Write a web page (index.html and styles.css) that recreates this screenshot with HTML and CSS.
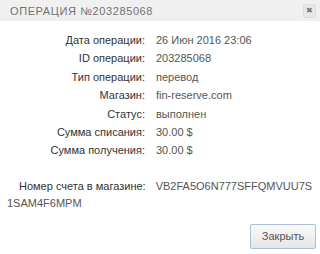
FILE: index.html
```html
<!DOCTYPE html>
<html lang="ru">
<head>
  <meta charset="UTF-8">
  <title>Операция №203285068</title>
  <link rel="stylesheet" href="styles.css">
</head>
<body>

<div class="dialog">
  <div class="dialog-head">
    <span class="dialog-title">Операция №203285068</span>
    <span class="dialog-close">&#x2716;</span>
  </div>

  <div class="dialog-body">
    <div class="row"><span class="label">Дата операции:</span><span class="value">26 Июн 2016 23:06</span></div>
    <div class="row"><span class="label">ID операции:</span><span class="value">203285068</span></div>
    <div class="row"><span class="label">Тип операции:</span><span class="value">перевод</span></div>
    <div class="row"><span class="label">Магазин:</span><span class="value">fin-reserve.com</span></div>
    <div class="row"><span class="label">Статус:</span><span class="value">выполнен</span></div>
    <div class="row"><span class="label">Сумма списания:</span><span class="value">30.00 $</span></div>
    <div class="row"><span class="label">Сумма получения:</span><span class="value">30.00 $</span></div>

    <p class="long"><span class="long-label">Номер счета в магазине:</span><span class="value">VB2FA5O6N777SFFQMVUU7S1SAM4F6MPM</span></p>
  </div>

  <div class="dialog-foot">
    <button class="btn">Закрыть</button>
  </div>
</div>

</body>
</html>
```

FILE: styles.css
```css
body {
  margin: 0;
  font-family: "Liberation Sans", Arial, sans-serif;
  font-size: 11px;
  color: #333;
  background: #fff;
}

.dialog-head {
  display: flex;
  align-items: center;
  justify-content: space-between;
  height: 21px;
  padding: 0 4px 0 10px;
  background: #f0f0f0;
}

.dialog-title {
  text-transform: uppercase;
  letter-spacing: 0.6px;
  color: #707070;
  font-size: 11px;
}

.dialog-close {
  width: 11px;
  height: 12px;
  border: 1px solid #ddd;
  border-radius: 2px;
  background: #e8e8e8;
  color: #777;
  font-size: 8px;
  line-height: 12px;
  text-align: center;
}

.dialog-body {
  padding: 10px 4px 0 7px;
}

.row {
  line-height: 18.4px;
}

.label {
  display: inline-block;
  width: 138px;
  text-align: right;
  margin-right: 11px;
}

.value {
  color: #555;
}

.long {
  margin: 18px 0 0 0;
  line-height: 17px;
  word-break: break-all;
}

.long-label {
  margin: 0 10px 0 12px;
}

.dialog-foot {
  display: flex;
  justify-content: flex-end;
  padding: 12px 4px 0 0;
}

.btn {
  width: 66px;
  height: 25px;
  font-family: "Liberation Sans", Arial, sans-serif;
  font-size: 11px;
  color: #555;
  background: linear-gradient(#fafafa, #e6e6e6);
  border: 1px solid #a9c0d8;
  border-radius: 2px;
}
```
